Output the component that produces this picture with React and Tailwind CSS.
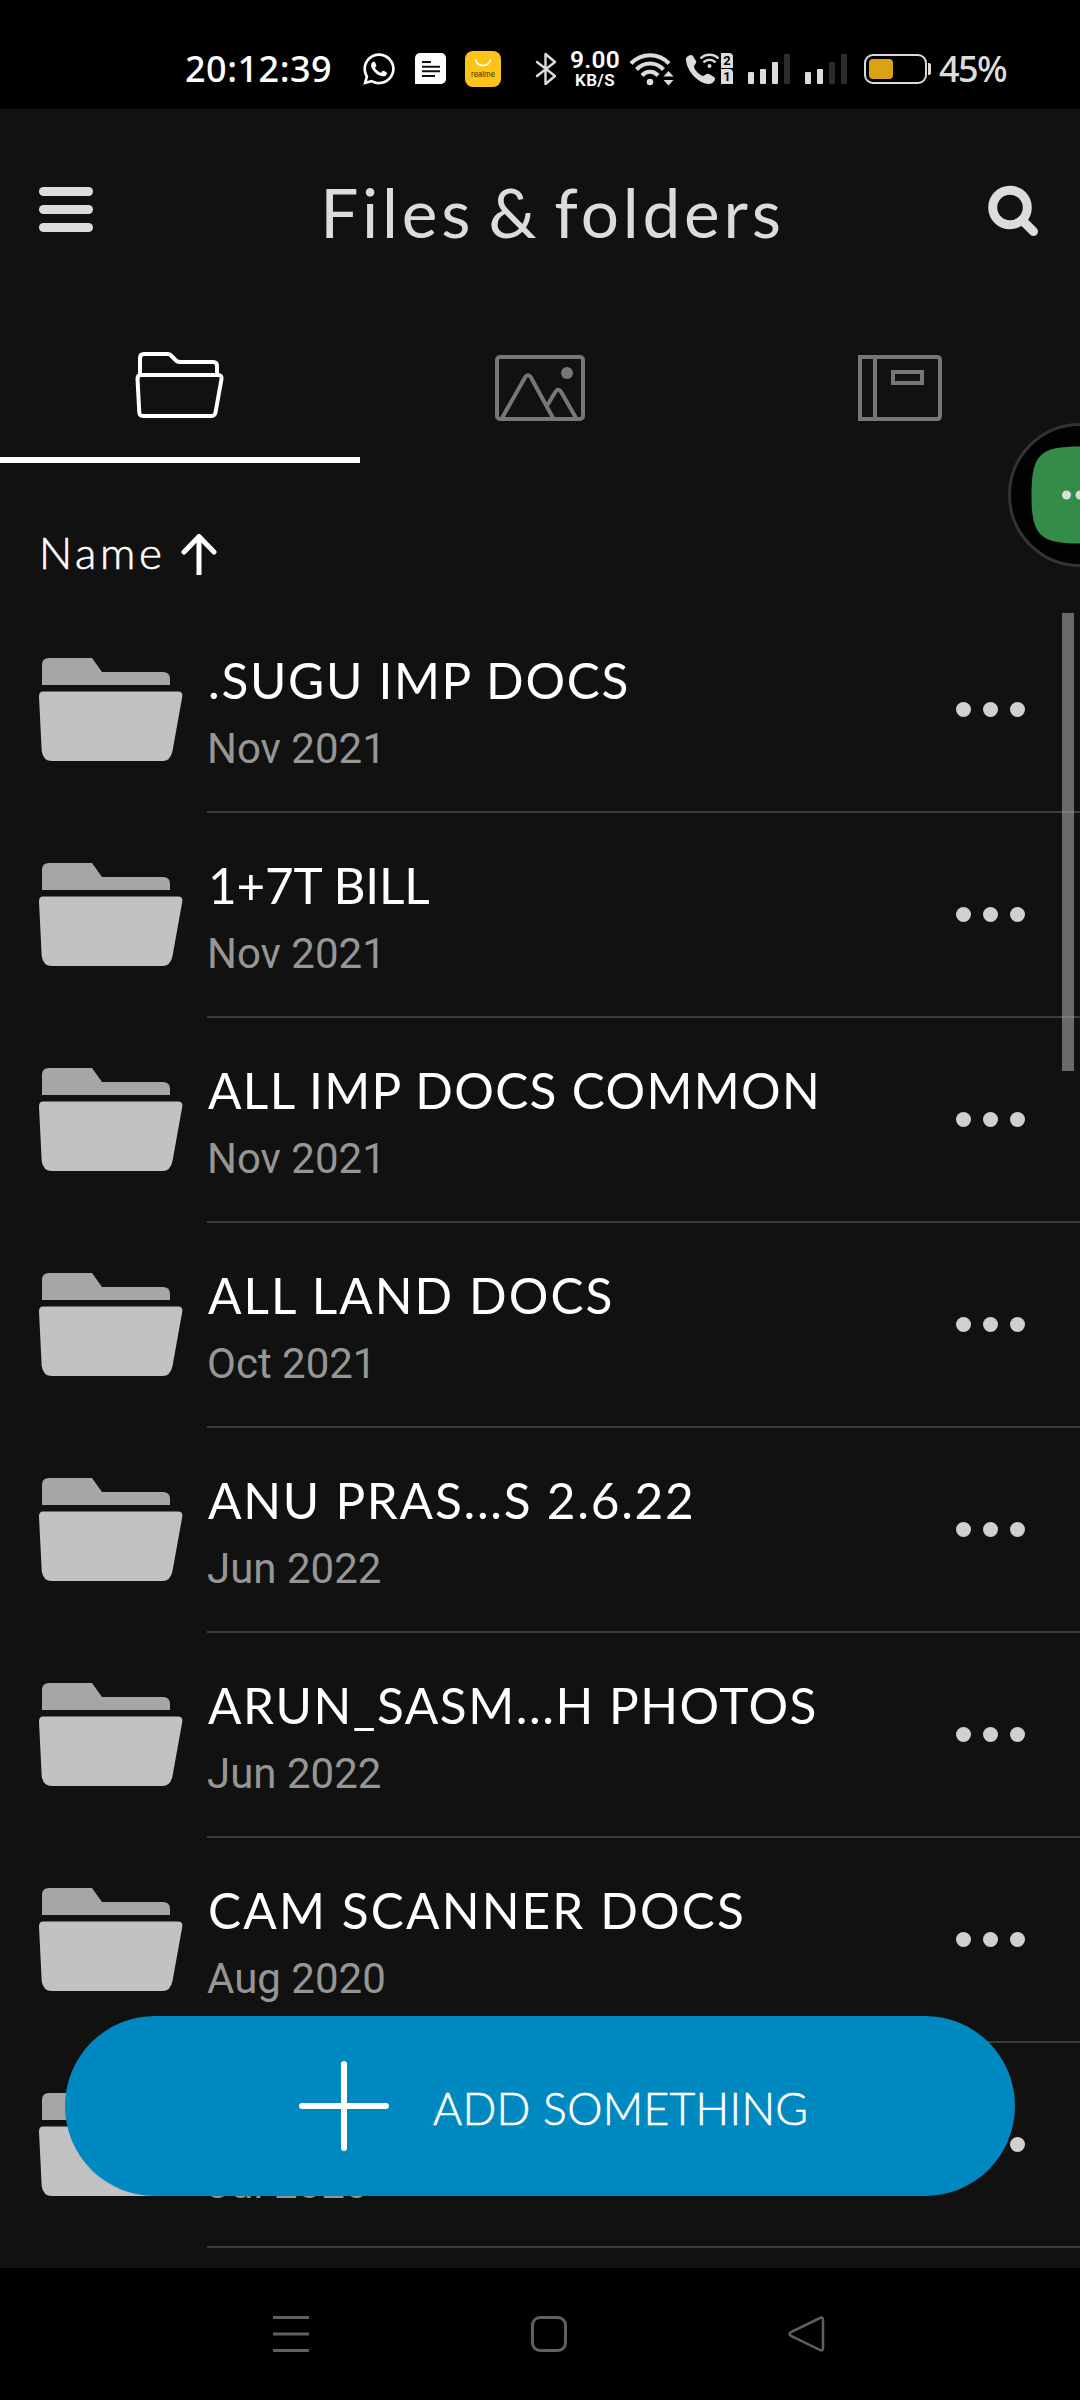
import React from 'react';
import { FaWhatsapp } from 'react-icons/fa';

const folders = [
  { name: '.SUGU IMP DOCS', date: 'Nov 2021', tracking: 'tracking-[1.7px]' },
  { name: '1+7T BILL', date: 'Nov 2021', tracking: 'tracking-[-0.2px]' },
  { name: 'ALL IMP DOCS COMMON', date: 'Nov 2021', tracking: 'tracking-[1.35px]' },
  { name: 'ALL LAND DOCS', date: 'Oct 2021', tracking: 'tracking-[2.05px]' },
  { name: 'ANU PRAS...S 2.6.22', date: 'Jun 2022', tracking: 'tracking-[1.75px]' },
  { name: 'ARUN_SASM...H PHOTOS', date: 'Jun 2022', tracking: 'tracking-[1.55px]' },
  { name: 'CAM SCANNER DOCS', date: 'Aug 2020', tracking: 'tracking-[2.15px]' },
  { name: '', date: 'Jul 2020', tracking: 'tracking-[1px]' },
];

function SignalBars({ level, className }) {
  const heights = [12, 15, 22, 30];
  return (
    <div className={`flex h-[30px] items-end gap-[6px] ${className}`}>
      {heights.map((h, i) => (
        <div
          key={h}
          className={`w-[6px] rounded-[1px] ${i < level ? 'bg-[#dcdcdc]' : 'bg-[#2c2c2c]'}`}
          style={{ height: h }}
        />
      ))}
    </div>
  );
}

function StatusBar() {
  return (
    <div className="flex h-[109px] shrink-0 items-center bg-black pt-[28px] text-[#dcdcdc]">
      <span className="ml-[185px] w-[148px] whitespace-nowrap font-['Noto_Sans',sans-serif] text-[36px] leading-none font-medium tracking-[0.5px] text-white">
        20:12:39
      </span>
      <FaWhatsapp className="ml-[28px] size-[36px] text-white" />

      {/* Messages notification */}
      <svg className="ml-[17px]" width="33" height="33" viewBox="0 0 33 33">
        <path d="M6 1h21a5 5 0 0 1 5 5v21a5 5 0 0 1-5 5H1V6a5 5 0 0 1 5-5z" fill="#fff" />
        <path d="M8 10h9M8 14.7h18M8 19.3h18M8 24h13" stroke="#111" strokeWidth="2" />
      </svg>

      {/* Store notification */}
      <div className="ml-[18px] flex size-[36px] flex-col items-center rounded-[8px] bg-[#fcc41a] pt-[8px]">
        <svg width="18" height="8" viewBox="0 0 18 8">
          <path d="M1.5 0.5C3.500 8.500 14.500 8.500 16.500 0.500" fill="none" stroke="#fff" strokeWidth="1.600" />
        </svg>
        <span className="mt-[3px] font-['Inter',sans-serif] text-[7.5px] leading-[10px] text-[#3c2c00]">realme</span>
      </div>

      {/* Bluetooth */}
      <svg className="ml-[34px]" width="23" height="34" viewBox="0 0 23 34">
        <path
          d="M2 10l18 14-9.500 8V2L20 10 2 24"
          fill="none"
          stroke="#dcdcdc"
          strokeWidth="2.400"
          strokeLinejoin="round"
          strokeLinecap="round"
        />
      </svg>

      <div className="ml-[11px] flex w-[52px] flex-col items-center font-['Roboto',sans-serif] text-white">
        <span className="text-[24.5px] leading-[20px] font-semibold tracking-[0.3px]">9.00</span>
        <span className="mt-[2px] text-[17px] leading-[16px] font-semibold tracking-[0.4px]">KB/S</span>
      </div>

      {/* Wifi with traffic arrows */}
      <svg className="ml-[8px]" width="46" height="34" viewBox="0 0 46 34">
        <g fill="none" stroke="#dcdcdc" strokeWidth="4.200">
          <path d="M2 11.500C12.500 0.500 29.500 0.500 40 11.500" />
          <path d="M7.500 17.500C15 9.500 27 9.500 34.500 17.500" />
          <path d="M13 23.500C17.500 18.500 24.500 18.500 29 23.500" />
        </g>
        <circle cx="21" cy="30" r="3.300" fill="#dcdcdc" />
        <path d="M34.500 24.500l5-5.500 5 5.500zM34.500 28l5 5.500 5-5.500z" fill="#dcdcdc" />
      </svg>

      {/* Wifi calling */}
      <svg className="ml-[10px]" width="36" height="34" viewBox="0 0 36 34">
        <path
          d="M1 8c-1-3 5-7 7-4l3 5c1 2-2 4-2 6 1 4 6 8 9 9 2 0 3-3 6-2l5 3c3 2-1 7-5 7C14 32 2 20 1 8z"
          fill="#dcdcdc"
        />
        <g fill="none" stroke="#dcdcdc" strokeWidth="2.300">
          <path d="M15.500 6.500C20.500 1.500 28.500 1.500 33.500 6.500" />
          <path d="M18.500 10.500C21.500 7 27.500 7 30.500 10.500" />
        </g>
        <circle cx="24.500" cy="14" r="2" fill="#dcdcdc" />
      </svg>
      <div className="flex flex-col gap-[1px] font-['Roboto',sans-serif] text-[13px] leading-[15px] font-bold text-black">
        <span className="h-[15px] w-[12px] rounded-tr-[4px] bg-[#dcdcdc] text-center">2</span>
        <span className="h-[15px] w-[12px] rounded-tr-[4px] bg-[#dcdcdc] text-center">1</span>
      </div>

      <SignalBars level={3} className="ml-[15px]" />
      <SignalBars level={2} className="ml-[15px]" />

      {/* Battery */}
      <div className="ml-[17px] h-[30px] w-[63px] rounded-[9px] border-2 border-[#dcdcdc] p-[3px]">
        <div className="h-[20px] w-[24px] rounded-[4px] bg-[#dba214]" />
      </div>
      <div className="ml-[1px] h-[12px] w-[3px] rounded-r-[2px] bg-[#dcdcdc]" />
      <span className="ml-[8px] font-['Noto_Sans',sans-serif] text-[36px] leading-none font-medium tracking-[-1.6px]">
        45%
      </span>
    </div>
  );
}

function Header() {
  return (
    <div className="flex h-[201px] shrink-0 items-center justify-between pr-[40px] pl-[39px]">
      <div className="flex w-[54px] flex-col gap-[9px]">
        <div className="h-[9px] rounded-full bg-[#dcdcdc]" />
        <div className="h-[9px] rounded-full bg-[#dcdcdc]" />
        <div className="h-[9px] rounded-full bg-[#dcdcdc]" />
      </div>
      <h1 className="pt-[5px] pl-[26px] text-[67.5px] leading-[80px] tracking-[3.8px] text-[#dcdcdc] [word-spacing:-7px]">
        Files &amp; folders
      </h1>
      <svg width="54" height="54" viewBox="0 0 54 54" fill="none" stroke="#dcdcdc">
        <circle cx="24" cy="24.500" r="17.300" strokeWidth="9" />
        <path d="M36 37L47.500 48.500" strokeWidth="9" strokeLinecap="round" />
      </svg>
    </div>
  );
}

function Tabs() {
  return (
    <div className="grid h-[153px] shrink-0 grid-cols-3">
      <div className="flex justify-center border-b-6 border-white pt-[35px]">
        <svg width="96" height="80" viewBox="0 0 96 80" fill="none" stroke="#fff" strokeWidth="4" strokeLinejoin="round">
          <path d="M8 29V13q0-4 4-4H36q2 0 3.500 2L43 14.500q2 2.500 5 2.500H81q4 0 4 4V29" />
          <path d="M9 30H86q4 0 3.500 4L83.500 67.500q-.7 3.500-4 3.500H11q-3.500 0-3.700-3.500L5.500 34q0-4 3.500-4z" />
        </svg>
      </div>
      <div className="flex justify-center pt-[35px]">
        <svg width="96" height="80" viewBox="0 0 96 80" fill="none" stroke="#777" strokeWidth="4" strokeLinejoin="round">
          <rect x="5" y="12" width="86" height="62" rx="3" />
          <path d="M10 73L33 32.500q3-4.500 6 0L61 73" />
          <path d="M55.500 60L63 47.500q3-5.500 6.500 0L84 73" />
          <circle cx="75" cy="28" r="6" fill="#777" stroke="none" />
        </svg>
      </div>
      <div className="flex justify-center pt-[35px]">
        <svg width="96" height="80" viewBox="0 0 96 80" fill="none" stroke="#777" strokeWidth="4">
          <path d="M8 12H85q3 0 3 3V71q0 3-3 3H8z" />
          <path d="M23 12V74" />
          <rect x="41" y="27" width="29" height="11" />
        </svg>
      </div>
    </div>
  );
}

function FolderIcon() {
  return (
    <svg className="mt-[50px] ml-[39px] shrink-0" width="144" height="104" viewBox="0 0 144 104">
      <path d="M3 27V7q0-7 7-7H53l10 14H124q7 0 7 7v6z" fill="#a6a6a6" />
      <path
        d="M4 33.500H139q5 0 4.300 5L133.500 93q-2 10-10 10H13q-9 0-10.300-10L0 38.500q0-5 4-5z"
        fill="#c2c2c2"
      />
    </svg>
  );
}

function FolderRow({ name, date, tracking }) {
  return (
    <div className="flex h-[205px] shrink-0">
      <FolderIcon />
      <div className="ml-[24px] flex flex-1 border-b-2 border-[#3c3c3c]">
        <div className="flex-1 pt-[42px] whitespace-nowrap">
          <div className={`h-[60px] pl-[1px] text-[49.5px] leading-[60px] text-white ${tracking}`}>{name}</div>
          <div className="mt-[14px] font-['Roboto',sans-serif] text-[42px] leading-[50px] text-[#969696]">{date}</div>
        </div>
        <div className="mt-[94px] mr-[55px] flex gap-[12px]">
          <div className="size-[15px] rounded-full bg-[#d0d0d0]" />
          <div className="size-[15px] rounded-full bg-[#d0d0d0]" />
          <div className="size-[15px] rounded-full bg-[#d0d0d0]" />
        </div>
      </div>
    </div>
  );
}

function NavBar() {
  return (
    <div className="flex h-[132px] shrink-0 items-center bg-black">
      <svg className="ml-[272px]" width="38" height="38" viewBox="0 0 38 38" stroke="#606060" strokeWidth="3">
        <path d="M1 2.500H37M1 19H37M1 35.500H37" />
      </svg>
      <div className="ml-[221px] size-[36px] rounded-[9px] border-3 border-[#606060]" />
      <svg className="ml-[220px]" width="40" height="38" viewBox="0 0 40 38" fill="none" stroke="#606060" strokeWidth="2.500">
        <path d="M33 3q3-1.500 3 2V33q0 3.500-3 2L4 21q-3-2 0-4z" />
      </svg>
    </div>
  );
}

export default function App() {
  return (
    <div className="relative flex h-[2400px] w-[1080px] flex-col overflow-hidden bg-[#111111] font-['Lato',sans-serif]">
      <StatusBar />
      <Header />
      <Tabs />

      {/* Sort order */}
      <div className="flex h-[145px] shrink-0 items-center pt-[36px] pl-[39px]">
        <span className="w-[142px] pb-[4px] text-[44px] leading-[54px] font-light tracking-[3.6px] text-white [-webkit-text-stroke:0.6px_white]">
          Name
        </span>
        <svg width="38" height="44" viewBox="0 0 38 44" fill="none" stroke="#fff" strokeWidth="5">
          <path d="M18 43V4" />
          <path d="M3 20L18 4.500 33 20" strokeLinecap="round" strokeLinejoin="round" />
        </svg>
      </div>

      <div className="flex flex-1 flex-col overflow-hidden">
        {folders.map((folder, index) => (
          <FolderRow key={index} {...folder} />
        ))}
      </div>
      <NavBar />

      {/* Scroll thumb */}
      <div className="absolute top-[613px] right-[6px] h-[458px] w-[12px] bg-[#b0b0b0]/56" />

      {/* Chat bubble, half off the edge */}
      <div className="absolute top-[423px] left-[1008px] flex size-[144px] items-center justify-center rounded-full border-3 border-[#333] bg-[#020202]">
        <svg className="shrink-0" width="98" height="98" viewBox="0 0 98 98">
          <path
            d="M49 .500C89 .500 97.500 8 97.500 49S89 97.500 49 97.500 .500 90 .500 49 9 .500 49 .500z"
            fill="#338d49"
          />
          <g fill="#dcdcdc">
            <circle cx="35.500" cy="49" r="4.500" />
            <circle cx="49" cy="49" r="4.500" />
            <circle cx="62.500" cy="49" r="4.500" />
          </g>
        </svg>
      </div>

      <button className="absolute top-[2016px] left-[65px] flex h-[180px] w-[950px] items-center rounded-full bg-[#0088c0] pl-[234px] text-white shadow-xs">
        <svg width="90" height="90" viewBox="0 0 90 90" stroke="#fff" strokeWidth="6" strokeLinecap="round">
          <path d="M45 3V87M3 45H87" />
        </svg>
        <span className="ml-[44px] pt-[4px] text-[44.5px] leading-[54px] font-light tracking-[0.3px] whitespace-nowrap [-webkit-text-stroke:0.6px_white]">
          ADD SOMETHING
        </span>
      </button>
    </div>
  );
}
